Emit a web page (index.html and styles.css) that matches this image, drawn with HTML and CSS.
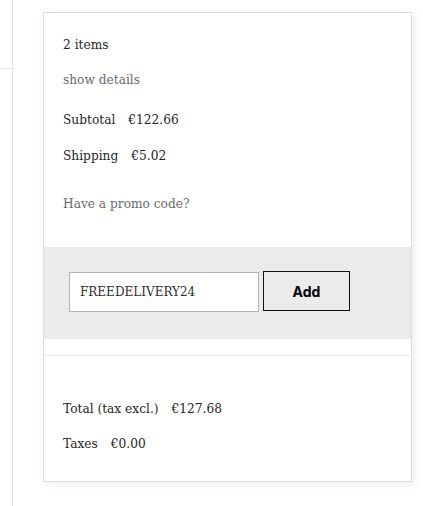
FILE: index.html
```html
<!DOCTYPE html>
<html>
<head>
<meta charset="utf-8">
<link rel="stylesheet" href="styles.css">
</head>
<body>
<div class="page">
  <div class="side">
    <div class="side-top"></div>
    <div class="side-rest"></div>
  </div>
  <div class="card">
    <div class="summary">
      <p class="line items">2 items</p>
      <p class="line link details">show details</p>
      <p class="line subtotal"><span class="label">Subtotal</span><span class="value">€122.66</span></p>
      <p class="line shipping"><span class="label">Shipping</span><span class="value">€5.02</span></p>
      <p class="line link promo">Have a promo code?</p>
    </div>
    <div class="promo-band">
      <div class="promo-field">FREEDELIVERY24</div>
      <button class="promo-add">Add</button>
    </div>
    <div class="divider"></div>
    <div class="totals">
      <p class="line total"><span class="label">Total (tax excl.)</span><span class="value">€127.68</span></p>
      <p class="line taxes"><span class="label">Taxes</span><span class="value">€0.00</span></p>
    </div>
  </div>
</div>
</body>
</html>
```
FILE: styles.css
```css
html, body {
  margin: 0;
  padding: 0;
  background: #ffffff;
}
.page {
  display: flex;
  align-items: flex-start;
  font-family: "DejaVu Serif", "Liberation Serif", serif;
  font-size: 12.2px;
  color: #262626;
}
.side {
  width: 12px;
  height: 506px;
  border-right: 1px solid #e6e6e6;
  display: flex;
  flex-direction: column;
  flex-shrink: 0;
}
.side-top {
  height: 68px;
  border-bottom: 1px solid #e6e6e6;
}
.card {
  margin-left: 30px;
  margin-top: 12px;
  width: 367px;
  border: 1px solid #dedede;
  box-shadow: 2px 2px 8px rgba(0, 0, 0, 0.08);
  background: #ffffff;
}
.summary {
  padding: 22px 20px 0 19px;
}
.line {
  margin: 0;
  line-height: 20px;
  display: flex;
  gap: 13px;
}
.link {
  color: #6a6a6a;
}
.details { margin-top: 15px; }
.subtotal { margin-top: 20px; }
.shipping { margin-top: 16px; }
.promo { margin-top: 28px; }
.promo-band {
  margin-top: 33px;
  background: #ebebeb;
  padding: 25px 0 27px 25px;
  display: flex;
  align-items: flex-start;
  gap: 4px;
}
.promo-field {
  box-sizing: border-box;
  width: 190px;
  height: 40px;
  border: 1px solid #b3b3b3;
  background: #ffffff;
  padding-left: 10px;
  display: flex;
  align-items: center;
  font-size: 12px;
  color: #2f2f2f;
}
.promo-add {
  box-sizing: border-box;
  width: 87px;
  height: 40px;
  margin-top: -1px;
  border: 1px solid #111111;
  background: #ebebeb;
  font-family: "Inter", "Noto Sans", sans-serif;
  font-weight: 700;
  font-size: 14px;
  color: #000000;
  padding: 0;
}
.divider {
  margin-top: 16px;
  height: 1px;
  background: #ebebeb;
}
.totals {
  padding: 43px 20px 27px 19px;
}
.taxes { margin-top: 15px; }
```
